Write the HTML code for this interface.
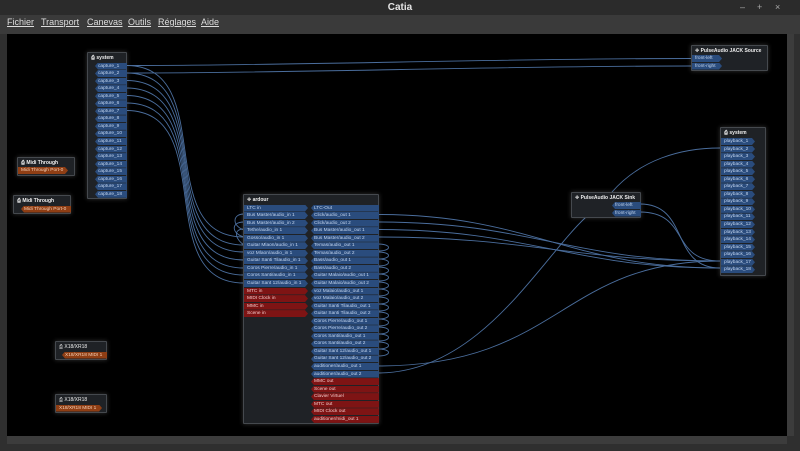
<!DOCTYPE html>
<html><head><meta charset="utf-8">
<style>
*{margin:0;padding:0;box-sizing:border-box}
body{width:800px;height:451px;background:#2f2f2f;font-family:"Liberation Sans","DejaVu Sans",sans-serif;position:relative;overflow:hidden}
#title{position:absolute;left:0;top:0;width:800px;height:15px;background:#2b2b2b;color:#e6e6e6;font-size:10px;font-weight:bold;text-align:center;line-height:15px}
#title .wb{position:absolute;top:0;color:#aaa;font-size:9px;font-weight:normal}
#menu{position:absolute;left:0;top:15px;width:800px;height:19px;background:#3a3a3a;color:#ddd;font-size:9px;line-height:15px}
#menu span{position:absolute;top:0;text-decoration:underline;text-decoration-thickness:0.5px;text-underline-offset:1px}
#canvas{position:absolute;left:7px;top:34px;width:780px;height:402px;background:#000}
#vs{position:absolute;left:787px;top:34px;width:7px;height:402px;background:#3c3c3c}
#hs{position:absolute;left:7px;top:436px;width:780px;height:8px;background:#3c3c3c}
.box{position:absolute;background:#1f2226;border:1px solid #45494e;box-shadow:0 0 5px rgba(200,200,200,0.25);border-radius:1px}
.t{position:absolute;left:3px;top:2px;color:#eee;font-size:5px;font-weight:bold;white-space:nowrap}
.col{position:absolute;display:flex;flex-direction:column;gap:0.55px}
.p{height:7px;font-size:4.8px;line-height:7px;white-space:nowrap;overflow:hidden;padding-left:3px}
.b{background:#2a4c7d;color:#c2d4ee}
.r{background:#7e1414;color:#f1c8c8}
.o{background:#8f3e14;color:#f5cfb5}
.in{clip-path:polygon(3px 0,100% 0,100% 100%,3px 100%,0 50%)}
.out{clip-path:polygon(0 0,calc(100% - 3px) 0,100% 50%,calc(100% - 3px) 100%,0 100%)}
svg{position:absolute;left:0;top:0}
</style></head><body>
<div id="title">Catia<span class="wb" style="left:740px">–</span><span class="wb" style="left:757px">+</span><span class="wb" style="left:775px">×</span></div>
<div id="menu"><span style="left:7px">Fichier</span><span style="left:41px">Transport</span><span style="left:87px">Canevas</span><span style="left:128px">Outils</span><span style="left:158px">Réglages</span><span style="left:201px">Aide</span></div>
<div id="canvas"></div><div id="vs"></div><div id="hs"></div>

<svg width="800" height="451" fill="none" stroke="#4a6d9c" stroke-width="0.9">
<path d="M126 65.5 C300 65.5,500 58.5,692 58.5"/>
<path d="M126 73 C300 73,500 66,692 66"/>
<path d="M126 65.5 C220 65.5,150 237,244 237"/>
<path d="M126 73 C220 73,150 245,244 245"/>
<path d="M126 80.5 C220 80.5,150 252,244 252"/>
<path d="M126 88 C220 88,150 260,244 260"/>
<path d="M126 95.5 C220 95.5,150 268,244 268"/>
<path d="M126 103 C220 103,150 275,244 275"/>
<path d="M126 110.5 C220 110.5,150 283,244 283"/>
<path d="M378 214.5 C530 214.5,570 268,720 268"/>
<path d="M378 222 C530 222,570 261,720 261"/>
<path d="M378 229.5 C530 229.5,570 268,720 268"/>
<path d="M378 237 C530 237,570 261,720 261"/>
<path d="M378 366 C560 366,560 261,720 261"/>
<path d="M378 373 C480 373,540 260,586 217"/>
<path d="M640 204 C690 204,670 268,720 268"/>
<path d="M640 212 C690 212,670 261,720 261"/>
<path d="M612 192 C640 160,680 148,720 148"/>
<path d="M378 244 C392 244,392 251,378 251 M378 252 C392 252,392 259,378 259 M378 259 C392 259,392 266,378 266 M378 267 C392 267,392 274,378 274 M378 274 C392 274,392 281,378 281 M378 282 C392 282,392 289,378 289 M378 289 C392 289,392 296,378 296 M378 297 C392 297,392 304,378 304 M378 304 C392 304,392 311,378 311 M378 312 C392 312,392 319,378 319 M378 319 C392 319,392 326,378 326 M378 327 C392 327,392 334,378 334 M378 334 C392 334,392 341,378 341 M378 342 C392 342,392 349,378 349 M378 349 C392 349,392 356,378 356"/>
<path d="M244 214 C232 214,232 226,244 230 M244 222 C230 222,232 234,244 237 M244 229 C232 229,236 240,244 245"/>
</svg>

<div class="box" style="left:87px;top:52px;width:40px;height:147px"><div class="t">⎙ system</div>
<div class="col" style="left:7px;top:9.5px;width:32px">
<div class="p b in">capture_1</div><div class="p b in">capture_2</div><div class="p b in">capture_3</div><div class="p b in">capture_4</div><div class="p b in">capture_5</div><div class="p b in">capture_6</div><div class="p b in">capture_7</div><div class="p b in">capture_8</div><div class="p b in">capture_9</div><div class="p b in">capture_10</div><div class="p b in">capture_11</div><div class="p b in">capture_12</div><div class="p b in">capture_13</div><div class="p b in">capture_14</div><div class="p b in">capture_15</div><div class="p b in">capture_16</div><div class="p b in">capture_17</div><div class="p b in">capture_18</div>
</div></div>

<div class="box" style="left:17px;top:157px;width:58px;height:19px"><div class="t">⎙ Midi Through</div>
<div class="col" style="left:0;top:9px;width:50px"><div class="p o out">Midi Through Port-0</div></div></div>
<div class="box" style="left:13px;top:195px;width:58px;height:19px"><div class="t">⎙ Midi Through</div>
<div class="col" style="left:7px;top:9.5px;width:50px"><div class="p o in">Midi Through Port-0</div></div></div>

<div class="box" style="left:55px;top:341px;width:52px;height:19px"><div class="t" style="font-weight:normal">⎙ X18/XR18</div>
<div class="col" style="left:6px;top:9.5px;width:45px"><div class="p o in">X18/XR18 MIDI 1</div></div></div>
<div class="box" style="left:55px;top:394px;width:52px;height:19px"><div class="t" style="font-weight:normal">⎙ X18/XR18</div>
<div class="col" style="left:0;top:9.5px;width:46px"><div class="p o out">X18/XR18 MIDI 1</div></div></div>

<div class="box" style="left:243px;top:194px;width:136px;height:230px"><div class="t">✥ ardour</div>
<div class="col" style="left:0;top:9.5px;width:64px">
<div class="p b out">LTC in</div><div class="p b out">Bus Master/audio_in 1</div><div class="p b out">Bus Master/audio_in 2</div><div class="p b out">Tethe/audio_in 1</div><div class="p b out">Gosso/audio_in 1</div><div class="p b out">Guitar Mlaon/audio_in 1</div><div class="p b out">voz Mlaon/audio_in 1</div><div class="p b out">Guitar Santi Tilaudio_in 1</div><div class="p b out">Coros Pierre/audio_in 1</div><div class="p b out">Coros Santi/audio_in 1</div><div class="p b out">Guitar Sant 12/audio_in 1</div>
<div class="p r out">MTC in</div><div class="p r out">MIDI Clock in</div><div class="p r out">MMC in</div><div class="p r out">Scene in</div>
</div>
<div class="col" style="left:67px;top:9.5px;width:68px">
<div class="p b in">LTC-Out</div><div class="p b in">Click/audio_out 1</div><div class="p b in">Click/audio_out 2</div><div class="p b in">Bus Master/audio_out 1</div><div class="p b in">Bus Master/audio_out 2</div><div class="p b in">Temas/audio_out 1</div><div class="p b in">Temas/audio_out 2</div><div class="p b in">Bass/audio_out 1</div><div class="p b in">Bass/audio_out 2</div><div class="p b in">Guitar Malaio/audio_out 1</div><div class="p b in">Guitar Malaio/audio_out 2</div><div class="p b in">voz Malaio/audio_out 1</div><div class="p b in">voz Malaio/audio_out 2</div><div class="p b in">Guitar Santi Tilaudio_out 1</div><div class="p b in">Guitar Santi Tilaudio_out 2</div><div class="p b in">Coros Pierre/audio_out 1</div><div class="p b in">Coros Pierre/audio_out 2</div><div class="p b in">Coros Santi/audio_out 1</div><div class="p b in">Coros Santi/audio_out 2</div><div class="p b in">Guitar Sant 12/audio_out 1</div><div class="p b in">Guitar Sant 12/audio_out 2</div><div class="p b in">auditioner/audio_out 1</div><div class="p b in">auditioner/audio_out 2</div>
<div class="p r in">MMC out</div><div class="p r in">Scene out</div><div class="p r in">Clavier Virtuel</div><div class="p r in">MTC out</div><div class="p r in">MIDI Clock out</div><div class="p r in">auditioner/midi_out 1</div>
</div></div>

<div class="box" style="left:691px;top:45px;width:77px;height:26px"><div class="t">✥ PulseAudio JACK Source</div>
<div class="col" style="left:0;top:9px;width:30px"><div class="p b out">front-left</div><div class="p b out">front-right</div></div></div>

<div class="box" style="left:571px;top:192px;width:70px;height:26px"><div class="t">✥ PulseAudio JACK Sink</div>
<div class="col" style="left:40px;top:9px;width:29px"><div class="p b in">front-left</div><div class="p b in">front-right</div></div></div>

<div class="box" style="left:720px;top:127px;width:46px;height:149px"><div class="t">⎙ system</div>
<div class="col" style="left:0;top:10px;width:34px">
<div class="p b out">playback_1</div><div class="p b out">playback_2</div><div class="p b out">playback_3</div><div class="p b out">playback_4</div><div class="p b out">playback_5</div><div class="p b out">playback_6</div><div class="p b out">playback_7</div><div class="p b out">playback_8</div><div class="p b out">playback_9</div><div class="p b out">playback_10</div><div class="p b out">playback_11</div><div class="p b out">playback_12</div><div class="p b out">playback_13</div><div class="p b out">playback_14</div><div class="p b out">playback_15</div><div class="p b out">playback_16</div><div class="p b out">playback_17</div><div class="p b out">playback_18</div>
</div></div>
</body></html>
